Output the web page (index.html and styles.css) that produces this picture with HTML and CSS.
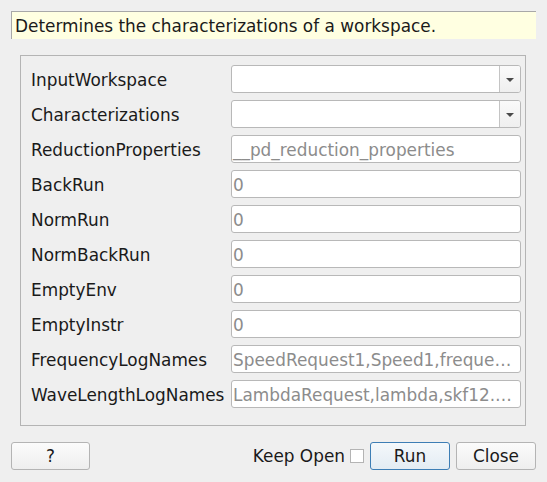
FILE: index.html
```html
<!DOCTYPE html>
<html>
<head>
<meta charset="utf-8">
<link rel="stylesheet" href="styles.css">
</head>
<body>
<div class="dialog">
  <div class="desc">Determines the characterizations of a workspace.</div>
  <div class="group">
    <div class="row"><div class="label">InputWorkspace</div><div class="combo"><div class="combo-text"></div><div class="combo-btn"><span class="arrow"></span></div></div></div>
    <div class="row"><div class="label">Characterizations</div><div class="combo"><div class="combo-text"></div><div class="combo-btn"><span class="arrow"></span></div></div></div>
    <div class="row"><div class="label">ReductionProperties</div><div class="field">__pd_reduction_properties</div></div>
    <div class="row"><div class="label">BackRun</div><div class="field">0</div></div>
    <div class="row"><div class="label">NormRun</div><div class="field">0</div></div>
    <div class="row"><div class="label">NormBackRun</div><div class="field">0</div></div>
    <div class="row"><div class="label">EmptyEnv</div><div class="field">0</div></div>
    <div class="row"><div class="label">EmptyInstr</div><div class="field">0</div></div>
    <div class="row"><div class="label">FrequencyLogNames</div><div class="field">SpeedRequest1,Speed1,freque…</div></div>
    <div class="row"><div class="label">WaveLengthLogNames</div><div class="field">LambdaRequest,lambda,skf12.…</div></div>
  </div>
  <div class="footer">
    <button class="btn help">?</button>
    <div class="spacer"></div>
    <label class="keep">Keep Open <span class="check"></span></label>
    <button class="btn run">Run</button>
    <button class="btn close">Close</button>
  </div>
</div>
</body>
</html>
```

FILE: styles.css
```css
html, body {
  margin: 0;
  padding: 0;
  background: #efefef;
}
body {
  font-family: "DejaVu Sans", sans-serif;
  font-size: 16.9px;
  color: #1a1a1a;
}
.dialog {
  width: 525px;
  padding: 11px 0 0 11px;
}
.desc {
  height: 28px;
  box-sizing: border-box;
  background: #ffffe1;
  border-top: 1px solid #a8a8a8;
  border-left: 1px solid #a8a8a8;
  padding-left: 3px;
  padding-top: 1px;
  display: flex;
  align-items: center;
  white-space: nowrap;
}
.group {
  margin: 16px 10px 0 9px;
  border: 1px solid #b4b4b4;
  padding: 9px 4px 17px 10px;
  display: flex;
  flex-direction: column;
  gap: 7px;
}
.row {
  display: flex;
  align-items: center;
  height: 28px;
}
.label {
  width: 200px;
  flex: none;
  white-space: nowrap;
  line-height: 28px;
  padding-top: 1px;
}
.field, .combo {
  flex: 1;
  height: 28px;
  box-sizing: border-box;
  border: 1px solid #b8b8b8;
  border-radius: 3px;
  background: #ffffff;
}
.field {
  color: #8c8c8c;
  padding-left: 1px;
  padding-top: 1px;
  display: flex;
  align-items: center;
  white-space: nowrap;
  overflow: hidden;
}
.combo {
  display: flex;
}
.combo-text {
  flex: 1;
}
.combo-btn {
  width: 20px;
  border-left: 1px solid #c4c4c4;
  background: linear-gradient(#fafafa, #efefef);
  border-radius: 0 2px 2px 0;
  display: flex;
  align-items: center;
  justify-content: center;
}
.arrow {
  width: 0;
  height: 0;
  border-left: 4px solid transparent;
  border-right: 4px solid transparent;
  border-top: 4px solid #4a4a4a;
  margin-top: 1px;
}
.footer {
  display: flex;
  align-items: center;
  margin-top: 16px;
  height: 28px;
}
.spacer {
  flex: 1;
}
.btn {
  font-family: "DejaVu Sans", sans-serif;
  font-size: 16.9px;
  color: #1a1a1a;
  height: 28px;
  box-sizing: border-box;
  border: 1px solid #b4b4b4;
  border-radius: 3px;
  background: linear-gradient(#fbfbfb, #eeeeee);
  padding: 0;
  margin: 0;
}
.help {
  width: 79px;
}
.keep {
  display: flex;
  align-items: center;
  white-space: nowrap;
  margin-right: 6px;
}
.check {
  width: 14px;
  height: 14px;
  box-sizing: border-box;
  border: 1px solid #b4b4b4;
  background: #ffffff;
  margin-left: 5px;
  display: inline-block;
}
.run {
  width: 80px;
  border-color: #3d7eb5;
  background: linear-gradient(#f4f8fb, #e3ecf3);
}
.close {
  width: 80px;
  margin-left: 6px;
}
```
